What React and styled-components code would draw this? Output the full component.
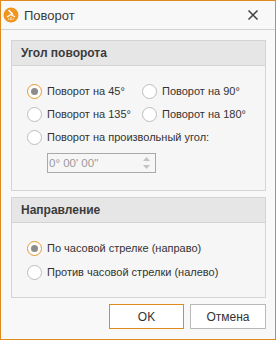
import styled, { createGlobalStyle } from "styled-components";

const GlobalStyle = createGlobalStyle`
  html, body {
    margin: 0;
    padding: 0;
    background: #ffffff;
  }
  * {
    box-sizing: border-box;
  }
`;

const FONT = `"Liberation Sans", Arial, sans-serif`;

const Window = styled.div`
  width: 276px;
  height: 340px;
  border: 1px solid #e0891c;
  background: #f8f8f8;
  display: flex;
  flex-direction: column;
  font-family: ${FONT};
  color: #333333;
`;

const TitleBar = styled.div`
  height: 29px;
  flex-shrink: 0;
  display: flex;
  align-items: center;
  padding: 0 0 0 2px;
  border-bottom: 1px solid #d2d2d2;
  background: #f8f8f8;
`;

const Title = styled.span`
  margin-left: 5px;
  font-size: 13px;
  color: #3a3a3a;
  flex: 1;
`;

const CloseButton = styled.div`
  width: 30px;
  height: 28px;
  display: flex;
  align-items: center;
  justify-content: center;
  margin-right: 7px;
`;

const Content = styled.div`
  padding: 10px 9px 0 10px;
  display: flex;
  flex-direction: column;
`;

const Group = styled.div`
  width: 255px;
  border: 1px solid #d4d4d4;
  background: #f6f6f6;
  margin-bottom: ${(p) => p.$gap || 0}px;
`;

const GroupHeader = styled.div`
  height: 25px;
  padding-left: 9px;
  display: flex;
  align-items: center;
  background: #e6e6e6;
  border-bottom: 1px solid #d4d4d4;
  font-weight: bold;
  font-size: 12px;
  color: #3c3c3c;
`;

const GroupBody = styled.div`
  padding: ${(p) => p.$pad};
`;

const RadioGrid = styled.div`
  display: grid;
  grid-template-columns: 115px 1fr;
  row-gap: ${(p) => p.$gap}px;
`;

const RadioRow = styled.label`
  height: 22px;
  display: flex;
  align-items: center;
  gap: 5px;
  font-size: 11px;
  color: #333333;
  white-space: nowrap;
  grid-column: ${(p) => (p.$wide ? "1 / span 2" : "auto")};
`;

const Circle = styled.span`
  width: 15px;
  height: 15px;
  border-radius: 50%;
  flex-shrink: 0;
  background: #ffffff;
  border: 1px solid ${(p) => (p.$checked ? "#e8962a" : "#bdbdbd")};
  display: flex;
  align-items: center;
  justify-content: center;

  &::after {
    content: "";
    display: ${(p) => (p.$checked ? "block" : "none")};
    width: 7px;
    height: 7px;
    border-radius: 50%;
    background: #8c8c8c;
  }
`;

const AngleInput = styled.div`
  margin: 5px 0 0 20px;
  width: 109px;
  height: 20px;
  border: 1px solid #a9a9a9;
  background: #f6f6f6;
  display: flex;
  align-items: center;
  padding-left: 1px;
  font-size: 11.5px;
  color: #9a9a9a;
`;

const InputText = styled.span`
  flex: 1;
`;

const Spinner = styled.div`
  width: 14px;
  display: flex;
  flex-direction: column;
  align-items: center;
  gap: 4px;
  margin-right: 2px;
`;

const Footer = styled.div`
  display: flex;
  justify-content: flex-end;
  gap: 6px;
  width: 255px;
`;

const Button = styled.button`
  width: ${(p) => p.$w}px;
  height: 25px;
  background: #ffffff;
  border: 1px solid ${(p) => (p.$primary ? "#e0891c" : "#b8b8b8")};
  font-family: ${FONT};
  font-size: 12px;
  color: #333333;
  padding: 0;
`;

const Radio = ({ checked, wide, children }) => (
  <RadioRow $wide={wide}>
    <Circle $checked={checked} />
    {children}
  </RadioRow>
);

const AppIcon = () => (
  <svg width="16" height="16" viewBox="0 0 16 16">
    <circle cx="8" cy="8" r="7.5" fill="#f0961e" />
    <path d="M6 3.5 L9.5 7" stroke="#fff" strokeWidth="1.6" strokeLinecap="round" />
    <path d="M4 10 L8 7.5 L12 10" stroke="#fff" strokeWidth="1.2" fill="none" />
    <path d="M5 12 h6" stroke="#fff" strokeWidth="1" strokeDasharray="1.2 1" />
    <path d="M8 10 v3" stroke="#fff" strokeWidth="1" strokeDasharray="1 1" />
  </svg>
);

const CloseIcon = () => (
  <svg width="12" height="12" viewBox="0 0 12 12">
    <path d="M1.5 1.5 L10.5 10.5 M10.5 1.5 L1.5 10.5" stroke="#404040" strokeWidth="1.5" />
  </svg>
);

const Arrows = () => (
  <Spinner>
    <svg width="7" height="4" viewBox="0 0 7 4">
      <path d="M0 4 L3.5 0 L7 4 Z" fill="#c4c4c4" />
    </svg>
    <svg width="7" height="4" viewBox="0 0 7 4">
      <path d="M0 0 L3.5 4 L7 0 Z" fill="#c4c4c4" />
    </svg>
  </Spinner>
);

export default function App() {
  return (
    <>
      <GlobalStyle />
      <Window>
        <TitleBar>
          <AppIcon />
          <Title>Поворот</Title>
          <CloseButton>
            <CloseIcon />
          </CloseButton>
        </TitleBar>
        <Content>
          <Group $gap={6}>
            <GroupHeader>Угол поворота</GroupHeader>
            <GroupBody $pad="14px 0 17px 15px">
              <RadioGrid $gap={1}>
                <Radio checked>Поворот на 45°</Radio>
                <Radio>Поворот на 90°</Radio>
                <Radio>Поворот на 135°</Radio>
                <Radio>Поворот на 180°</Radio>
                <Radio wide>Поворот на произвольный угол:</Radio>
              </RadioGrid>
              <AngleInput>
                <InputText>0° 00' 00"</InputText>
                <Arrows />
              </AngleInput>
            </GroupBody>
          </Group>
          <Group $gap={6}>
            <GroupHeader>Направление</GroupHeader>
            <GroupBody $pad="14px 0 14px 15px">
              <RadioGrid $gap={2}>
                <Radio checked wide>По часовой стрелке (направо)</Radio>
                <Radio wide>Против часовой стрелки (налево)</Radio>
              </RadioGrid>
            </GroupBody>
          </Group>
          <Footer>
            <Button $primary $w={75}>OK</Button>
            <Button $w={76}>Отмена</Button>
          </Footer>
        </Content>
      </Window>
    </>
  );
}
